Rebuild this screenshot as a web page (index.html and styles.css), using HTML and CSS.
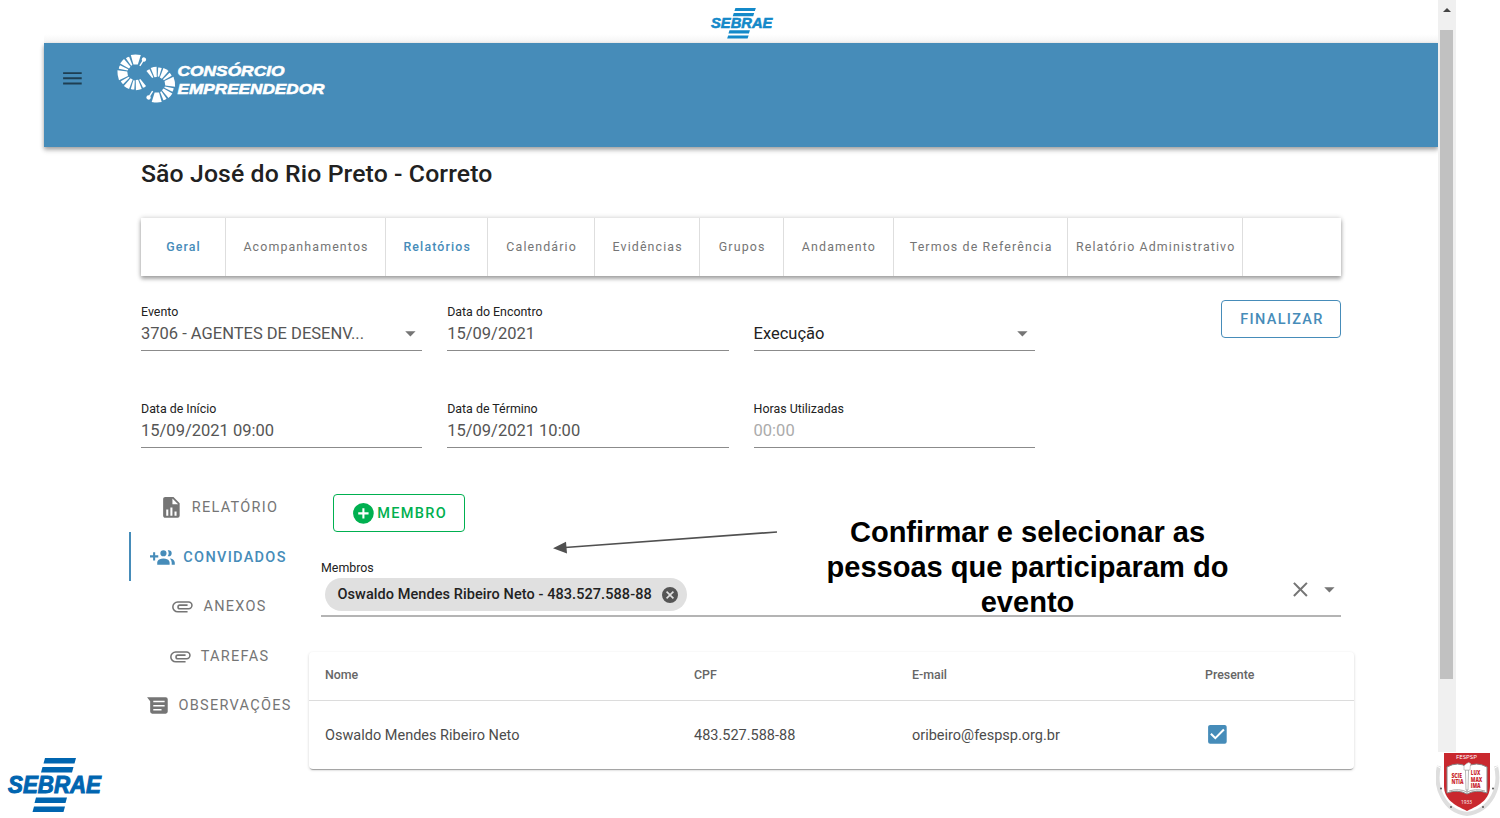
FILE: index.html
```html
<!DOCTYPE html>
<html lang="pt-BR">
<head>
<meta charset="utf-8">
<title>Consórcio Empreendedor</title>
<link rel="stylesheet" href="styles.css">
</head>
<body>
<div class="slide">
  <div class="screen">
    <div class="page">
      <div class="topbar">
        <svg class="sebrae-small" viewBox="0 0 94 54" preserveAspectRatio="none">
          <g class="sebrae-light">
            <path d="M37 0H68L66.500 5.500H35.500ZM34.500 9H65.500L64 14.500H33ZM28 39.500H59L57.500 45H26.500ZM26 48.500H57L55.500 54H24.500Z"/>
            <text x="0" y="36" textLength="93" lengthAdjust="spacingAndGlyphs">SEBRAE</text>
          </g>
        </svg>
      </div>
      <header class="appbar">
        <svg class="menu" viewBox="0 0 24 24"><path d="M3 6H21V7.800H3V6M3 11H21V12.800H3V11M3 16H21V17.800H3V16Z"/></svg>
        <svg class="brand" viewBox="0 0 222 52">
          <defs>
            <path id="wide" d="M-2.200-8L-5-17.500Q0-18.500 5-17.500L2.200-8Z"/>
            <path id="mid" d="M-1.200-7.500L-3-17.500Q0-18 3-17.500L1.200-7.500Z"/>
            <path id="thin" d="M-.7-8L-1.800-17Q0-17.500 1.800-17L.7-8Z"/>
            <g id="pin"><path d="M-.7-8V-15H.7V-8Z"/><circle cy="-15.500" r="2.200"/></g>
            <g id="ring">
              <use href="#pin" transform="rotate(33)"/>
              <use href="#wide" transform="rotate(1)"/>
              <use href="#thin" transform="rotate(-28)"/>
              <use href="#mid" transform="rotate(-50)"/>
              <use href="#thin" transform="rotate(-71)"/>
              <use href="#wide" transform="rotate(-99)"/>
              <use href="#thin" transform="rotate(-127)"/>
              <use href="#mid" transform="rotate(-149)"/>
              <use href="#thin" transform="rotate(-170)"/>
              <use href="#mid" transform="rotate(-191)"/>
              <use href="#thin" transform="rotate(-212)"/>
            </g>
          </defs>
          <use href="#ring" transform="translate(18.500 19.500)"/>
          <use href="#ring" transform="translate(40 31.500) rotate(180)"/>
          <text x="60.500" y="23.200" textLength="107" lengthAdjust="spacingAndGlyphs">CONSÓRCIO</text>
          <text x="60.500" y="41" textLength="147" lengthAdjust="spacingAndGlyphs">EMPREENDEDOR</text>
        </svg>
      </header>
      <main class="content">
        <h1 class="title">São José do Rio Preto - Correto</h1>
        <nav class="tabs">
          <span class="tab t-geral on">Geral</span>
          <span class="tab t-acomp">Acompanhamentos</span>
          <span class="tab t-relat on">Relatórios</span>
          <span class="tab t-cal">Calendário</span>
          <span class="tab t-evid">Evidências</span>
          <span class="tab t-grup">Grupos</span>
          <span class="tab t-anda">Andamento</span>
          <span class="tab t-termo">Termos de Referência</span>
          <span class="tab t-adm">Relatório Administrativo</span>
        </nav>
        <section class="form">
          <div class="field"><label>Evento</label><div class="value"><span>3706 - AGENTES DE DESENV...</span><svg class="ico" viewBox="0 0 24 24"><path d="M7 10L12 15L17 10H7Z"/></svg></div></div>
          <div class="field"><label>Data do Encontro</label><div class="value">15/09/2021</div></div>
          <div class="field"><label></label><div class="value dark"><span>Execução</span><svg class="ico" viewBox="0 0 24 24"><path d="M7 10L12 15L17 10H7Z"/></svg></div></div>
          <button class="btn finish">FINALIZAR</button>
          <div class="field"><label>Data de Início</label><div class="value">15/09/2021 09:00</div></div>
          <div class="field"><label>Data de Término</label><div class="value">15/09/2021 10:00</div></div>
          <div class="field"><label>Horas Utilizadas</label><div class="value hint">00:00</div></div>
        </section>
        <section class="lower">
          <aside class="side">
            <div class="item"><svg class="ico" viewBox="0 0 24 24"><path fill-rule="evenodd" d="M13 9H18.500L13 3.500V9M6 2H14L20 8V20A2 2 0 0 1 18 22H6C4.890 22 4 21.100 4 20V4C4 2.890 4.890 2 6 2M7 20H9V14H7V20M11 20H13V12H11V20M15 20H17V16H15V20Z"/></svg>RELATÓRIO</div>
            <div class="item active"><svg class="ico" viewBox="0 0 24 24"><path d="M19 17V19H7V17S7 13 13 13 19 17 19 17M16 8A3 3 0 1 0 13 11A3 3 0 0 0 16 8M19.200 13.060A5.600 5.600 0 0 1 21 17V19H24V17S24 13.550 19.200 13.060M18 5A2.910 2.910 0 0 0 17.110 5.140A5 5 0 0 1 17.110 10.860A2.910 2.910 0 0 0 18 11A3 3 0 0 0 18 5M8 10H5V7H3V10H0V12H3V15H5V12H8V10Z"/></svg>CONVIDADOS</div>
            <div class="item"><svg class="ico" viewBox="0 0 24 24"><path d="M7.500 18A5.500 5.500 0 0 1 2 12.500A5.500 5.500 0 0 1 7.500 7H18A4 4 0 0 1 22 11A4 4 0 0 1 18 15H9.500A2.500 2.500 0 0 1 7 12.500A2.500 2.500 0 0 1 9.500 10H17V11.500H9.500A1 1 0 0 0 8.500 12.500A1 1 0 0 0 9.500 13.500H18A2.500 2.500 0 0 0 20.500 11A2.500 2.500 0 0 0 18 8.500H7.500A4 4 0 0 0 3.500 12.500A4 4 0 0 0 7.500 16.500H17V18H7.500Z"/></svg>ANEXOS</div>
            <div class="item"><svg class="ico" viewBox="0 0 24 24"><path d="M7.500 18A5.500 5.500 0 0 1 2 12.500A5.500 5.500 0 0 1 7.500 7H18A4 4 0 0 1 22 11A4 4 0 0 1 18 15H9.500A2.500 2.500 0 0 1 7 12.500A2.500 2.500 0 0 1 9.500 10H17V11.500H9.500A1 1 0 0 0 8.500 12.500A1 1 0 0 0 9.500 13.500H18A2.500 2.500 0 0 0 20.500 11A2.500 2.500 0 0 0 18 8.500H7.500A4 4 0 0 0 3.500 12.500A4 4 0 0 0 7.500 16.500H17V18H7.500Z"/></svg>TAREFAS</div>
            <div class="item"><svg class="ico" viewBox="0 0 24 24"><path fill-rule="evenodd" d="M2 4H20A2 2 0 0 1 22 6V18A2 2 0 0 1 20 20H7A2 2 0 0 1 5 18V8ZM8 7.500V9H19V7.500ZM8 11.500V13H19V11.500ZM8 15.500V17H16V15.500Z"/></svg>OBSERVAÇÕES</div>
          </aside>
          <div class="panel">
            <button class="btn member"><svg class="ico" viewBox="0 0 24 24"><path d="M17 13H13V17H11V13H7V11H11V7H13V11H17M12 2A10 10 0 0 0 2 12A10 10 0 0 0 12 22A10 10 0 0 0 22 12A10 10 0 0 0 12 2Z"/></svg>MEMBRO</button>
            <div class="members">
              <label>Membros</label>
              <div class="members-row">
                <span class="chip">Oswaldo Mendes Ribeiro Neto - 483.527.588-88<svg viewBox="0 0 20 20"><path fill-rule="evenodd" d="M10 0A10 10 0 1 0 10 20A10 10 0 1 0 10 0M15 13.590L13.590 15L10 11.410L6.410 15L5 13.590L8.590 10L5 6.410L6.410 5L10 8.590L13.590 5L15 6.410L11.410 10Z"/></svg></span>
                <span class="actions"><svg class="ico" viewBox="0 0 24 24"><path d="M19 6.410L17.590 5L12 10.590L6.410 5L5 6.410L10.590 12L5 17.590L6.410 19L12 13.410L17.590 19L19 17.590L13.410 12L19 6.410Z"/></svg><svg class="ico" viewBox="0 0 24 24"><path d="M7 10L12 15L17 10H7Z"/></svg></span>
              </div>
            </div>
            <div class="table">
              <div class="row head"><span>Nome</span><span>CPF</span><span>E-mail</span><span>Presente</span></div>
              <div class="row"><span>Oswaldo Mendes Ribeiro Neto</span><span>483.527.588-88</span><span>oribeiro@fespsp.org.br</span><span><svg class="ico check" viewBox="0 0 24 24"><path d="M10 17L5 12L6.410 10.580L10 14.170L17.590 6.580L19 8M19 3H5C3.890 3 3 3.890 3 5V19A2 2 0 0 0 5 21H19A2 2 0 0 0 21 19V5C21 3.890 20.100 3 19 3Z"/></svg></span></div>
            </div>
          </div>
        </section>
      </main>
    </div>
    <div class="scroll"><svg class="up" viewBox="0 0 8 4"><path d="M0 4L4 0L8 4Z"/></svg><div class="thumb"></div></div>
  </div>

  <svg class="arrow" viewBox="0 0 230 30"><path d="M227 6L15 21.500" stroke="#505050" stroke-width="1.700"/><path d="M3 22.300L16 15.700L17 27.500Z" fill="#505050"/></svg>
  <p class="note">Confirmar e selecionar as pessoas que participaram do evento</p>

  <svg class="sebrae-big" viewBox="0 0 94 54">
    <g class="sebrae-dark">
      <path d="M37 0H68L66.500 5.500H35.500ZM34.500 9H65.500L64 14.500H33ZM28 39.500H59L57.500 45H26.500ZM26 48.500H57L55.500 54H24.500Z"/>
      <text x="0" y="35" textLength="93" lengthAdjust="spacingAndGlyphs">SEBRAE</text>
    </g>
  </svg>
  <svg class="crest" viewBox="0 0 64 66">
    <path d="M3 14Q-1 31 6 44Q14 60 31 62Q48 60 57 44Q64 31 60 14" fill="none" stroke="#dedede" stroke-width="4"/>
    <path d="M1 14L6 17M57 17L62 14" stroke="#fff" stroke-width="1"/>
    <path d="M8 1H54V34C54 47 44 53 31 59C18 53 8 47 8 34Z" fill="#c9282e"/>
    <path d="M11 15Q22 9 31 15Q40 9 51 15V41Q40 37 31 42Q22 37 11 41Z" fill="#fff" stroke="#858585" stroke-width="1"/>
    <path d="M31 17V41M13 39Q23 36 31 40Q39 36 49 39" fill="none" stroke="#aaa" stroke-width="1"/>
    <path d="M29.500 18H32.500L32 38H30Z" fill="#fff" stroke="#999" stroke-width=".7"/>
    <path d="M28 18Q27 13 30 12Q33 9 35 12Q34 13 34 18Z" fill="#fff" stroke="#aaa" stroke-width=".6"/>
    <g class="crest-light"><text x="20" y="7.200" textLength="21" lengthAdjust="spacingAndGlyphs">FESPSP</text><text x="25" y="51.500" textLength="11" lengthAdjust="spacingAndGlyphs">1933</text></g>
    <g class="crest-red"><text x="15.500" y="26" textLength="10.500" lengthAdjust="spacingAndGlyphs">SCIE</text><text x="15.500" y="32.200" textLength="12" lengthAdjust="spacingAndGlyphs">NTIA</text><text x="34.800" y="22.800" textLength="9.500" lengthAdjust="spacingAndGlyphs">LUX</text><text x="34.800" y="29.500" textLength="11.500" lengthAdjust="spacingAndGlyphs">MAX</text><text x="34.800" y="36" textLength="9.800" lengthAdjust="spacingAndGlyphs">IMA</text></g>
    <g fill="#555"><circle cx="5" cy="36.500" r="1"/><circle cx="15" cy="55" r="1"/><circle cx="47" cy="55" r="1"/><circle cx="57" cy="36.500" r="1"/></g>
  </svg>
</div>
</body>
</html>
```
FILE: styles.css
```css
* { box-sizing: border-box; }
body { margin: 0; background: #fff; font-family: Roboto, "Liberation Sans", sans-serif; }
.slide { position: relative; width: 1500px; height: 818px; overflow: hidden; }
.screen { display: flex; width: 1412px; height: 752px; margin-left: 44px; }
.page { width: 1394.400px; flex: none; }
.ico { width: 24.8px; height: 24.8px; fill: currentColor; flex: none; display: block; }

.topbar { height: 43px; padding-top: 8px; background: linear-gradient(#fff 80%, #f3f3f3); }
.sebrae-small { display: block; width: 62px; height: 30.5px; margin-left: 667px; overflow: visible; }
.sebrae-light { fill: #1389c9; }
.sebrae-dark { fill: #0065b0; }
.sebrae-light text, .sebrae-dark text { font: italic 900 23.500px "Liberation Sans", sans-serif; stroke-width: 1; }
.sebrae-light text { stroke: #1389c9; font-size: 26px; }
.sebrae-dark text { stroke: #0065b0; }

.appbar { display: flex; height: 104px; background: #468cb9; box-shadow: 0 2px 4px rgba(0,0,0,.3), 0 4px 5px rgba(0,0,0,.12); }
.menu { width: 24.8px; height: 24.8px; margin: 23px 0 0 16px; fill: #1e3e52; }
.brand { width: 222px; height: 52px; margin: 10px 0 0 32.200px; fill: #fff; }
.brand text { font: italic bold 15.500px "Liberation Sans", sans-serif; stroke: #fff; stroke-width: .6; }

.content { padding: 0 97px; width: 1394px; }
.title { margin: 0; height: 71px; padding-top: 11px; font-size: 24.800px; line-height: 31px; font-weight: 500; color: #212121; letter-spacing: .1px; white-space: nowrap; }
.tabs { display: flex; height: 58px; background: #fff; box-shadow: 0 3px 4px rgba(0,0,0,.3), 0 0 5px rgba(0,0,0,.2); }
.tab { display: flex; align-items: center; justify-content: center; padding: 0 0 2px 1px; border-right: 1px solid #dedede; font-size: 12.400px; letter-spacing: 1.130px; color: #757575; white-space: nowrap; }
.on { color: #468cb9; font-weight: 500; }
.t-geral { width: 85px; }
.t-acomp { width: 160px; }
.t-relat { width: 102.400px; }
.t-cal { width: 106.500px; }
.t-evid { width: 105.500px; }
.t-grup { width: 83.500px; }
.t-anda { width: 110px; }
.t-termo { width: 174.500px; }
.t-adm { width: 174.500px; }

.form { display: grid; grid-template-columns: 281.300px 281.500px 281.500px 1fr; column-gap: 24.900px; grid-template-rows: 97px 97px; padding-top: 24px; }
.field { height: 51px; border-bottom: 1px solid #8b8b8b; padding-top: 3px; }
.field label, .members label { display: block; height: 17px; line-height: 17px; font-size: 12.400px; color: #222; }
.value { display: flex; justify-content: space-between; align-items: center; height: 27px; font-size: 16.500px; color: #555; white-space: nowrap; }
.value .ico { color: #757575; }
.dark { color: #222; }
.hint { color: #ababab; }
.btn { display: flex; align-items: center; justify-content: center; height: 38px; border: 1px solid currentColor; border-radius: 4px; background: #fff; font: 500 14.500px Roboto, sans-serif; letter-spacing: 1.300px; padding: 0; }
.finish { width: 120px; padding: 1px 0 0 2px; color: #468cb9; justify-self: end; }

.lower { display: flex; margin: 0 -13px 0 -12px; }
.side { width: 179.500px; flex: none; margin-top: -12px; }
.item { display: flex; align-items: center; justify-content: center; gap: 8.300px; height: 49.600px; padding: 1px 2.500px 0 0; border-left: 2px solid transparent; font-size: 14.500px; letter-spacing: 1.300px; color: #757575; }
.active { padding-top: 2px; border-color: #468cb9; color: #468cb9; font-weight: 500; }
.panel { width: 1045.500px; flex: none; }
.member { width: 132px; margin: 0 0 0 24.500px; color: #00b050; gap: 1.500px; }
.members { margin: 27px 13px 0 12.500px; height: 58px; border-bottom: 2px solid #b4b4b4; }
.members-row { display: flex; justify-content: space-between; align-items: flex-start; padding-left: 4px; }
.chip { display: flex; align-items: center; justify-content: space-between; width: 362px; height: 33px; margin-top: 2px; padding: 0 9.500px 0 12.500px; border-radius: 17px; background: #e0e0e0; color: #222; font-size: 14.500px; letter-spacing: .07px; font-weight: 500; white-space: nowrap; }
.chip svg { width: 16px; height: 16px; fill: #555; }
.actions { display: flex; gap: 4px; color: #757575; padding-top: 1px; margin-right: -.500px; }
.table { margin-top: 35px; height: 117px; border-radius: 4px; box-shadow: 0 2px 1px -1px rgba(0,0,0,.3), 0 1px 3px rgba(0,0,0,.18); }
.row { display: grid; grid-template-columns: 369px 218px 293px 1fr; align-items: center; height: 68px; padding-left: 16.500px; font-size: 14.500px; color: #4c4c4c; }
.head { height: 49px; padding-bottom: 3px; border-bottom: 1px solid #dcdcdc; font-size: 12.400px; font-weight: 500; color: #666; }
.check { color: #468cb9; margin: -2px 0 0 -.500px; }

.scroll { width: 17.600px; background: #f0f0f0; }
.up { display: block; width: 8px; height: 4px; margin: 8px auto 18px 5px; fill: #444; }
.thumb { width: 13px; height: 649px; margin-left: 2px; background: #c1c1c1; }

.arrow { position: absolute; left: 550px; top: 526px; width: 230px; height: 30px; }
.note { position: absolute; left: 817.500px; top: 515px; width: 420px; margin: 0; text-align: center; font: bold 29.050px/35px "Liberation Sans", Arial, sans-serif; color: #000; }
.sebrae-big { position: absolute; left: 8px; top: 758px; width: 94px; height: 54px; overflow: visible; }
.crest { position: absolute; left: 1436px; top: 752px; width: 64px; height: 66px; }
.crest text { font-family: "Open Sans", sans-serif; }
.crest-light { fill: #fff; font-size: 5.500px; }
.crest-red { fill: #c9282e; font-size: 6.300px; font-weight: 800; }
```
